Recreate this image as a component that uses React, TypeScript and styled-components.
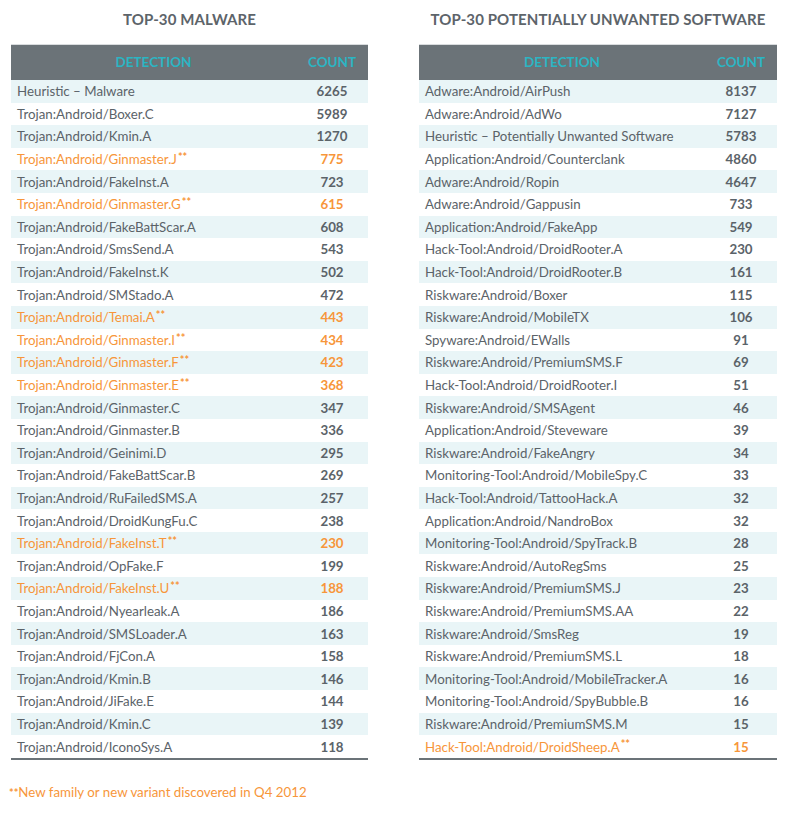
import React from "react";
import styled, { createGlobalStyle } from "styled-components";

const Global = createGlobalStyle`
  html, body { margin: 0; padding: 0; background: #ffffff; }
  body { font-family: Lato, "Open Sans", sans-serif; color: #5b6369; }
`;

type Row = [string, number, boolean?];

const malware: Row[] = [
  ["Heuristic – Malware", 6265],
  ["Trojan:Android/Boxer.C", 5989],
  ["Trojan:Android/Kmin.A", 1270],
  ["Trojan:Android/Ginmaster.J", 775, true],
  ["Trojan:Android/FakeInst.A", 723],
  ["Trojan:Android/Ginmaster.G", 615, true],
  ["Trojan:Android/FakeBattScar.A", 608],
  ["Trojan:Android/SmsSend.A", 543],
  ["Trojan:Android/FakeInst.K", 502],
  ["Trojan:Android/SMStado.A", 472],
  ["Trojan:Android/Temai.A", 443, true],
  ["Trojan:Android/Ginmaster.I", 434, true],
  ["Trojan:Android/Ginmaster.F", 423, true],
  ["Trojan:Android/Ginmaster.E", 368, true],
  ["Trojan:Android/Ginmaster.C", 347],
  ["Trojan:Android/Ginmaster.B", 336],
  ["Trojan:Android/Geinimi.D", 295],
  ["Trojan:Android/FakeBattScar.B", 269],
  ["Trojan:Android/RuFailedSMS.A", 257],
  ["Trojan:Android/DroidKungFu.C", 238],
  ["Trojan:Android/FakeInst.T", 230, true],
  ["Trojan:Android/OpFake.F", 199],
  ["Trojan:Android/FakeInst.U", 188, true],
  ["Trojan:Android/Nyearleak.A", 186],
  ["Trojan:Android/SMSLoader.A", 163],
  ["Trojan:Android/FjCon.A", 158],
  ["Trojan:Android/Kmin.B", 146],
  ["Trojan:Android/JiFake.E", 144],
  ["Trojan:Android/Kmin.C", 139],
  ["Trojan:Android/IconoSys.A", 118],
];

const pua: Row[] = [
  ["Adware:Android/AirPush", 8137],
  ["Adware:Android/AdWo", 7127],
  ["Heuristic – Potentially Unwanted Software", 5783],
  ["Application:Android/Counterclank", 4860],
  ["Adware:Android/Ropin", 4647],
  ["Adware:Android/Gappusin", 733],
  ["Application:Android/FakeApp", 549],
  ["Hack-Tool:Android/DroidRooter.A", 230],
  ["Hack-Tool:Android/DroidRooter.B", 161],
  ["Riskware:Android/Boxer", 115],
  ["Riskware:Android/MobileTX", 106],
  ["Spyware:Android/EWalls", 91],
  ["Riskware:Android/PremiumSMS.F", 69],
  ["Hack-Tool:Android/DroidRooter.I", 51],
  ["Riskware:Android/SMSAgent", 46],
  ["Application:Android/Steveware", 39],
  ["Riskware:Android/FakeAngry", 34],
  ["Monitoring-Tool:Android/MobileSpy.C", 33],
  ["Hack-Tool:Android/TattooHack.A", 32],
  ["Application:Android/NandroBox", 32],
  ["Monitoring-Tool:Android/SpyTrack.B", 28],
  ["Riskware:Android/AutoRegSms", 25],
  ["Riskware:Android/PremiumSMS.J", 23],
  ["Riskware:Android/PremiumSMS.AA", 22],
  ["Riskware:Android/SmsReg", 19],
  ["Riskware:Android/PremiumSMS.L", 18],
  ["Monitoring-Tool:Android/MobileTracker.A", 16],
  ["Monitoring-Tool:Android/SpyBubble.B", 16],
  ["Riskware:Android/PremiumSMS.M", 15],
  ["Hack-Tool:Android/DroidSheep.A", 15, true],
];

const Page = styled.div`
  width: 809px;
  height: 816px;
  box-sizing: border-box;
  padding: 0 0 0 11px;
  display: flex;
  flex-direction: column;
`;

const Columns = styled.div`
  display: flex;
  gap: 51px;
`;

const Section = styled.section<{ $w: number }>`
  width: ${(p) => p.$w}px;
  display: flex;
  flex-direction: column;
`;

const Title = styled.h2`
  margin: 0;
  height: 44px;
  display: flex;
  align-items: center;
  justify-content: center;
  padding-bottom: 6px;
  box-sizing: border-box;
  font-family: Lato, sans-serif;
  font-size: 15px;
  font-weight: 700;
  letter-spacing: 0.1px;
  color: #5d646a;
`;

const Table = styled.div`
  display: grid;
  grid-template-columns: 1fr 72px;
  border-bottom: 2px solid #6b7378;
`;

const HeadCell = styled.div`
  height: 34px;
  border-top: 1px solid #d9dcde;
  background: #6b7378;
  color: #2bb5c3;
  font-size: 13.5px;
  font-weight: 700;
  display: flex;
  align-items: center;
  justify-content: center;
  padding-bottom: 1px;
  box-sizing: content-box;
`;

const Cell = styled.div<{ $alt: boolean; $hl: boolean; $num?: boolean }>`
  height: 22.6px;
  display: flex;
  align-items: center;
  justify-content: ${(p) => (p.$num ? "center" : "flex-start")};
  padding-left: ${(p) => (p.$num ? "0" : "6px")};
  background: ${(p) => (p.$alt ? "#e9f5f7" : "#ffffff")};
  color: ${(p) => (p.$hl ? "#f7963a" : "#5b6369")};
  font-size: 13.3px;
  font-weight: ${(p) => (p.$num ? 700 : 400)};
  white-space: nowrap;
`;

const Star = styled.span`
  font-size: 11px;
  font-weight: 700;
  line-height: 1;
  align-self: flex-start;
  margin-top: 3px;
  margin-left: 1px;
`;

const Footnote = styled.p`
  margin: 24px 0 0 -3px;
  display: flex;
  font-size: 13.3px;
  color: #f7963a;
`;

function DataTable({ title, rows, width }: { title: string; rows: Row[]; width: number }) {
  return (
    <Section $w={width}>
      <Title>{title}</Title>
      <Table>
        <HeadCell>DETECTION</HeadCell>
        <HeadCell>COUNT</HeadCell>
        {rows.map(([name, count, hl], i) => (
          <React.Fragment key={name + i}>
            <Cell $alt={i % 2 === 0} $hl={!!hl}>
              {name}
              {hl && <Star>**</Star>}
            </Cell>
            <Cell $alt={i % 2 === 0} $hl={!!hl} $num>
              {count}
            </Cell>
          </React.Fragment>
        ))}
      </Table>
    </Section>
  );
}

export default function App() {
  return (
    <>
      <Global />
      <Page>
        <Columns>
          <DataTable title="TOP-30 MALWARE" rows={malware} width={357} />
          <DataTable title="TOP-30 POTENTIALLY UNWANTED SOFTWARE" rows={pua} width={358} />
        </Columns>
        <Footnote>
          <Star>**</Star>New family or new variant discovered in Q4 2012
        </Footnote>
      </Page>
    </>
  );
}
